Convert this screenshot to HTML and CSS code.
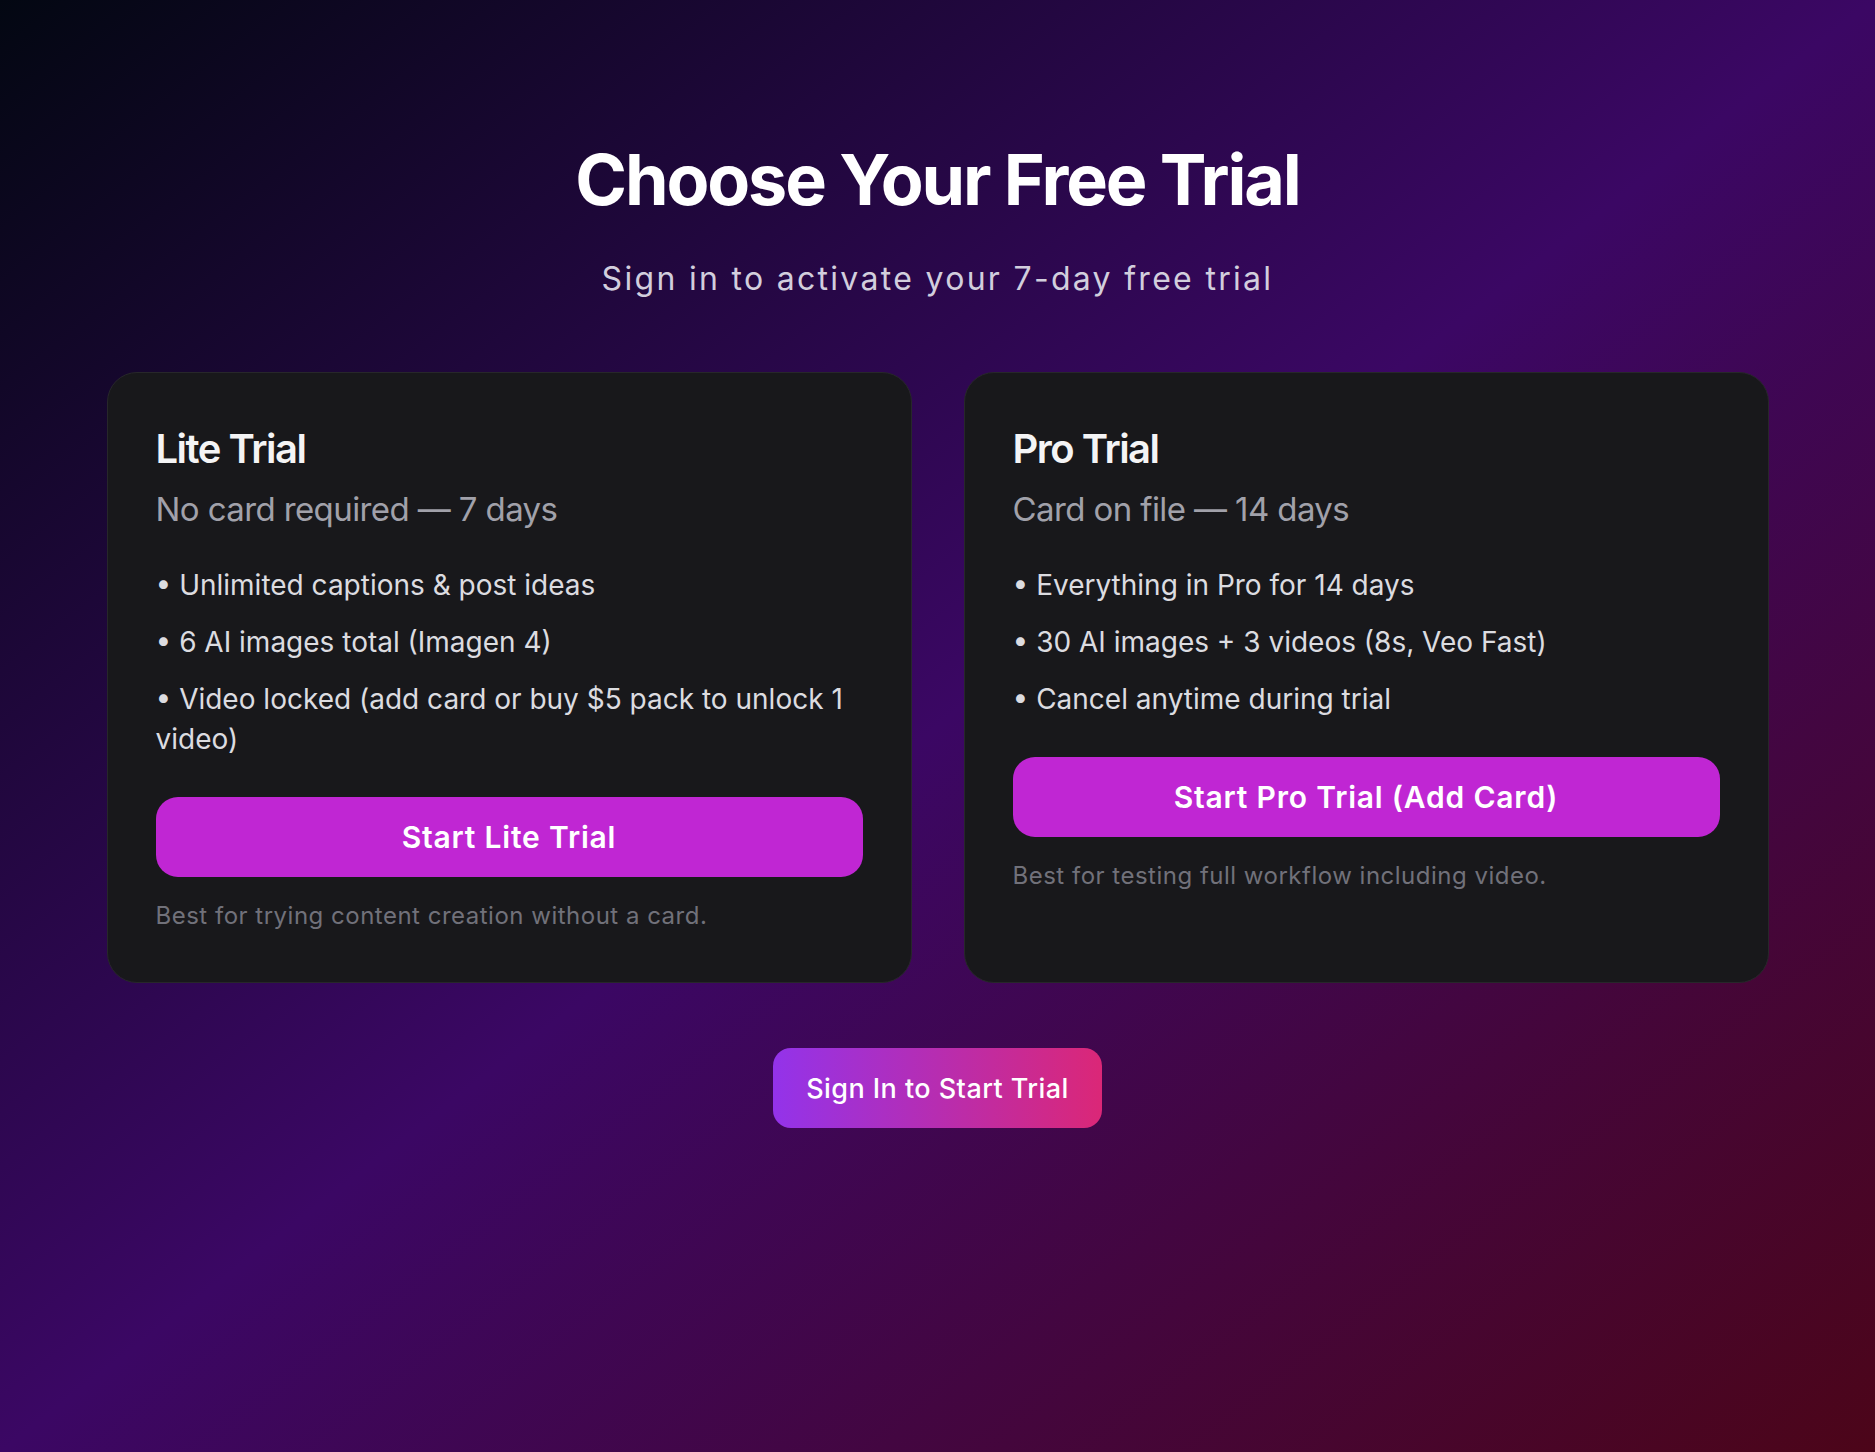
FILE: index.html
```html
<!DOCTYPE html>
<html lang="en">
<head>
<meta charset="utf-8">
<title>Choose Your Free Trial</title>
<link rel="stylesheet" href="styles.css">
</head>
<body>
<main class="page">
  <header class="intro">
    <h1 class="intro-title">Choose Your Free Trial</h1>
    <p class="intro-sub">Sign in to activate your 7-day free trial</p>
  </header>

  <section class="plans">
    <article class="plan">
      <h2 class="plan-name">Lite Trial</h2>
      <p class="plan-term">No card required — 7 days</p>
      <ul class="plan-features">
        <li>• Unlimited captions &amp; post ideas</li>
        <li>• 6 AI images total (Imagen 4)</li>
        <li>• Video locked (add card or buy $5 pack to unlock 1 video)</li>
      </ul>
      <button class="plan-btn" type="button">Start Lite Trial</button>
      <p class="plan-note">Best for trying content creation without a card.</p>
    </article>

    <article class="plan">
      <h2 class="plan-name">Pro Trial</h2>
      <p class="plan-term">Card on file — 14 days</p>
      <ul class="plan-features">
        <li>• Everything in Pro for 14 days</li>
        <li>• 30 AI images + 3 videos (8s, Veo Fast)</li>
        <li>• Cancel anytime during trial</li>
      </ul>
      <button class="plan-btn" type="button">Start Pro Trial (Add Card)</button>
      <p class="plan-note">Best for testing full workflow including video.</p>
    </article>
  </section>

  <div class="signin-row">
    <button class="signin-btn" type="button">Sign In to Start Trial</button>
  </div>
</main>
</body>
</html>
```

FILE: styles.css
```css
* {
  box-sizing: border-box;
}

html, body {
  margin: 0;
  padding: 0;
}

body {
  min-height: 100vh;
  font-family: Inter, "Noto Sans", "Liberation Sans", sans-serif;
  background: linear-gradient(to bottom right, #030712 0%, #3b0764 50%, #4c0519 100%);
  color: #ffffff;
}

.page {
  min-height: 1452px;
  padding: 145px 0 0;
  display: flex;
  flex-direction: column;
  align-items: center;
}

.intro {
  text-align: center;
}

.intro-title {
  margin: 0;
  font-size: 70px;
  line-height: 70px;
  font-weight: 700;
  letter-spacing: -2.1px;
  color: #ffffff;
}

.intro-sub {
  margin: 41px 0 0;
  font-size: 32px;
  line-height: 46px;
  font-weight: 400;
  letter-spacing: 2.3px;
  color: #d2cedd;
}

.plans {
  margin-top: 70px;
  width: 1662px;
  display: grid;
  grid-template-columns: 1fr 1fr;
  gap: 52px;
}

.plan {
  background: #18181b;
  border: 1px solid #27272a;
  border-radius: 30px;
  padding: 48px;
  display: flex;
  flex-direction: column;
}

.plan-name {
  margin: 0;
  font-size: 40px;
  line-height: 55px;
  font-weight: 600;
  letter-spacing: -1.5px;
  color: #f4f4f5;
}

.plan-term {
  margin: 9px 0 0;
  font-size: 33px;
  line-height: 48px;
  font-weight: 400;
  letter-spacing: -0.6px;
  color: #a1a1aa;
}

.plan-features {
  margin: 32px 0 0;
  padding: 0;
  list-style: none;
  display: flex;
  flex-direction: column;
  gap: 17px;
}

.plan-features li {
  font-size: 28px;
  line-height: 40px;
  color: #dcdce0;
}

.plan-btn {
  margin-top: 38px;
  height: 80px;
  width: 100%;
  border: 0;
  border-radius: 22px;
  background: #c026d3;
  color: #ffffff;
  font-family: inherit;
  font-size: 30px;
  font-weight: 600;
  letter-spacing: 0.8px;
  display: flex;
  align-items: center;
  justify-content: center;
  cursor: pointer;
}

.plan-note {
  margin: 21px 0 0;
  font-size: 24px;
  line-height: 36px;
  letter-spacing: 0.5px;
  color: #71717a;
}

.signin-row {
  margin-top: 65px;
  display: flex;
  justify-content: center;
}

.signin-btn {
  height: 80px;
  padding: 0 33px;
  border: 0;
  border-radius: 18px;
  background: linear-gradient(to right, #9333ea, #db2777);
  color: #ffffff;
  font-family: inherit;
  font-size: 27px;
  font-weight: 500;
  letter-spacing: 0.45px;
  cursor: pointer;
}
```
